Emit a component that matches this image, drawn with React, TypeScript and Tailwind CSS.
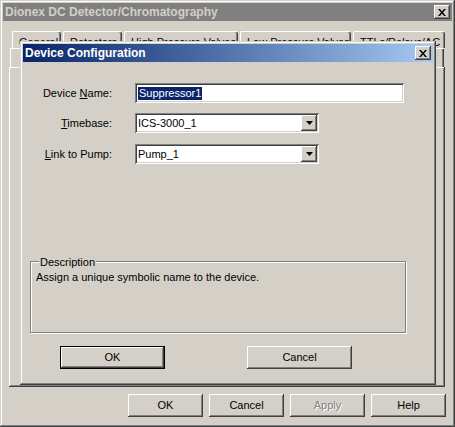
import type { ReactNode } from "react";

const font = "font-['Liberation_Sans',Arial,sans-serif]";

// win2k bevels
const frame =
  "shadow-[inset_-1px_-1px_#404040,inset_1px_1px_#d4d0c8,inset_-2px_-2px_#808080,inset_2px_2px_#ffffff]";
const panel =
  "shadow-[inset_-1px_-1px_#404040,inset_1px_1px_#ffffff,inset_-2px_-2px_#808080]";
const raised =
  "shadow-[inset_-1px_-1px_#404040,inset_1px_1px_#ffffff,inset_-2px_-2px_#808080,inset_2px_2px_#d4d0c8]";
const sunken =
  "shadow-[inset_1px_1px_#808080,inset_-1px_-1px_#ffffff,inset_2px_2px_#404040,inset_-2px_-2px_#d4d0c8]";

function CloseBox() {
  return (
    <div className={`flex h-[14px] w-[16px] items-center justify-center bg-[#d4d0c8] ${raised}`}>
      <svg width="8" height="7" viewBox="0 0 8 7">
        <path d="M0 0h2l2 2.5L6 0h2L5 3.5 8 7H6L4 4.5 2 7H0l3-3.5z" fill="#000" />
      </svg>
    </div>
  );
}

function Button({
  children,
  width,
  isDefault,
  disabled,
}: {
  children: ReactNode;
  width: string;
  isDefault?: boolean;
  disabled?: boolean;
}) {
  const inner = (
    <div
      className={`flex h-full w-full items-center justify-center bg-[#d4d0c8] ${raised} ${
        disabled ? "text-[#808080] [text-shadow:1px_1px_#ffffff]" : "text-black"
      }`}
    >
      {children}
    </div>
  );
  if (isDefault) {
    return <div className={`${width} h-[23px] border border-black`}>{inner}</div>;
  }
  return <div className={`${width} h-[23px]`}>{inner}</div>;
}

function Combo({ value, width }: { value: string; width: string }) {
  return (
    <div className={`${width} flex h-[20px] bg-white p-[2px] ${sunken}`}>
      <div className="flex flex-1 items-center pl-[1px] leading-none">{value}</div>
      <div className={`flex h-[16px] w-[16px] items-center justify-center bg-[#d4d0c8] ${raised}`}>
        <svg width="7" height="4" viewBox="0 0 7 4">
          <path d="M0 0h7L3.5 4z" fill="#000" />
        </svg>
      </div>
    </div>
  );
}

const tabs = [
  { label: "General", w: "w-[49px]" },
  { label: "Detectors", w: "w-[59px]" },
  { label: "High Pressure Valves", w: "w-[114px]" },
  { label: "Low Pressure Valves", w: "w-[111px]" },
  { label: "TTLs/Relays/AC", w: "w-[92px]" },
];

export default function App() {
  return (
    <div className={`relative h-[427px] w-[455px] bg-[#d4d0c8] p-[3px] text-[11px] text-black ${font} ${frame}`}>
      {/* outer title bar */}
      <div className="flex h-[18px] items-center justify-between bg-[#808080] pl-[2px] pr-[2px]">
        <span className="text-[12px] font-bold text-[#d4d0c8]">Dionex DC Detector/Chromatography</span>
        <CloseBox />
      </div>

      {/* tab rows */}
      <div className="mt-[10px] flex pl-[9px]">
        {tabs.map((t) => (
          <div
            key={t.label}
            className={`${t.w} mr-[2px] h-[17px] whitespace-nowrap rounded-t-[2px] border-l border-t border-white pl-[6px] pt-[2px] shadow-[inset_-1px_0_#404040,inset_-2px_0_#808080]`}
          >
            {t.label}
          </div>
        ))}
      </div>
      <div className="ml-[7px] h-[19px] w-[434px] border-l border-t border-white shadow-[inset_-1px_0_#404040,inset_-2px_0_#808080]" />

      {/* tab panel */}
      <div className={`ml-[6px] h-[320px] w-[436px] ${panel}`} />

      {/* property sheet buttons */}
      <div className="mt-[7px] flex justify-end gap-[6px] pr-[6px]">
        <Button width="w-[75px]">OK</Button>
        <Button width="w-[75px]">Cancel</Button>
        <Button width="w-[75px]" disabled>
          Apply
        </Button>
        <Button width="w-[75px]">Help</Button>
      </div>

      {/* Device Configuration dialog, floating over the sheet */}
      <div className={`absolute left-[20px] top-[41px] h-[344px] w-[416px] bg-[#d4d0c8] p-[3px] ${frame}`}>
        <div className="flex h-[18px] items-center justify-between bg-gradient-to-r from-[#0a246a] to-[#a6caf0] pl-[2px] pr-[2px]">
          <span className="text-[12px] font-bold text-white">Device Configuration</span>
          <CloseBox />
        </div>

        <div className="flex flex-col">
          <div className="mt-[21px] flex items-center">
            <div className="w-[89px] text-right">
              Device <u>N</u>ame:
            </div>
            <div className={`ml-[23px] flex h-[20px] w-[269px] items-center bg-white pl-[3px] ${sunken}`}>
              <span className="bg-[#0a246a] px-[1px] leading-[13px] text-white">Suppressor1</span>
            </div>
          </div>

          <div className="mt-[10px] flex items-center">
            <div className="w-[89px] text-right">
              <u>T</u>imebase:
            </div>
            <div className="ml-[23px]">
              <Combo value="ICS-3000_1" width="w-[184px]" />
            </div>
          </div>

          <div className="mt-[11px] flex items-center">
            <div className="w-[89px] text-right">
              <u>L</u>ink to Pump:
            </div>
            <div className="ml-[23px]">
              <Combo value="Pump_1" width="w-[184px]" />
            </div>
          </div>

          {/* description group */}
          <div className="relative ml-[7px] mt-[97px] h-[72px] w-[376px] border border-[#808080] shadow-[1px_1px_#ffffff,inset_1px_1px_#ffffff]">
            <span className="absolute -top-[8px] left-[8px] bg-[#d4d0c8] px-[1px]">Description</span>
            <div className="pl-[5px] pt-[7px]">Assign a unique symbolic name to the device.</div>
          </div>

          <div className="mt-[13px] flex">
            <div className="ml-[37px]">
              <Button width="w-[105px]" isDefault>
                OK
              </Button>
            </div>
            <div className="ml-[82px]">
              <Button width="w-[105px]">Cancel</Button>
            </div>
          </div>
        </div>
      </div>
    </div>
  );
}
